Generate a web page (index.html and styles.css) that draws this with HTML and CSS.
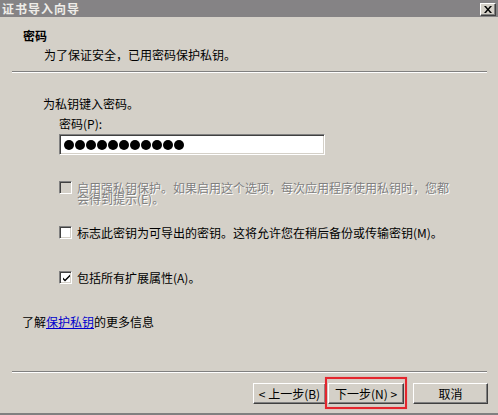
FILE: index.html
```html
<!DOCTYPE html>
<html lang="zh-CN">
<head>
<meta charset="utf-8">
<title>证书导入向导</title>
<link rel="stylesheet" href="styles.css">
</head>
<body>
<div class="window">
  <div class="titlebar">
    <span class="title">证书导入向导</span>
    <span class="close"><svg width="8" height="7" viewBox="0 0 8 7"><path d="M0 0h2l2 2.5 2-2.5h2l-3 3.5 3 3.5h-2l-2-2.5-2 2.5h-2l3-3.5z" fill="#000"/></svg></span>
  </div>
  <div class="header">
    <div class="h-title">密码</div>
    <div class="h-sub">为了保证安全，已用密码保护私钥。</div>
  </div>
  <div class="sep"></div>
  <div class="content">
    <div class="intro">为私钥键入密码。</div>
    <div class="field">
      <div class="label">密码(P):</div>
      <div class="input">
        <span class="dot"></span><span class="dot"></span><span class="dot"></span><span class="dot"></span><span class="dot"></span><span class="dot"></span><span class="dot"></span><span class="dot"></span><span class="dot"></span><span class="dot"></span><span class="dot"></span>
      </div>
      <div class="row row-1 disabled">
        <span class="cb cb-disabled"></span>
        <span class="cb-text">启用强私钥保护。如果启用这个选项，每次应用程序使用私钥时，您都会得到提示(E)。</span>
      </div>
      <div class="row row-2">
        <span class="cb"></span>
        <span class="cb-text">标志此密钥为可导出的密钥。这将允许您在稍后备份或传输密钥(M)。</span>
      </div>
      <div class="row row-3">
        <span class="cb"><svg width="9" height="9" viewBox="0 0 9 9"><path d="M1 3.5l2 2 5-5v2l-5 5-2-2z" fill="#000"/></svg></span>
        <span class="cb-text">包括所有扩展属性(A)。</span>
      </div>
    </div>
    <div class="more">了解<span class="link">保护私钥</span>的更多信息</div>
  </div>
  <div class="sep sep-bottom"></div>
  <div class="buttons">
    <span class="btn btn-back">&lt; 上一步(B)</span>
    <span class="btn btn-next">下一步(N) &gt;</span>
    <span class="btn btn-cancel">取消</span>
  </div>
</div>
</body>
</html>
```

FILE: styles.css
```css
* { box-sizing: border-box; }
html, body { margin: 0; padding: 0; }
body {
  width: 498px;
  height: 415px;
  background: #d4d0c8;
  font-family: "Noto Sans CJK SC", "Noto Sans", sans-serif;
  font-size: 12px;
  color: #000;
  overflow: hidden;
}
.window {
  width: 498px;
  height: 415px;
  display: flex;
  flex-direction: column;
  border-bottom: 2px solid #808080;
}
.titlebar {
  height: 17px;
  background: #858385;
  display: flex;
  align-items: center;
  justify-content: space-between;
  padding: 0 2px 0 2px;
}
.title {
  color: #efede9;
  font-weight: bold;
  font-size: 12px;
  letter-spacing: 1px;
  line-height: 13px;
}
.close {
  width: 16px;
  height: 13px;
  background: #d4d0c8;
  border-top: 1px solid #fff;
  border-left: 1px solid #fff;
  border-right: 1px solid #404040;
  border-bottom: 1px solid #404040;
  box-shadow: inset -1px -1px 0 #808080;
  display: flex;
  align-items: center;
  justify-content: center;
  margin-top: 1px;
}
.header { padding: 12px 0 0 23px; }
.h-title { font-weight: bold; line-height: 13px; }
.h-sub { margin: 6px 0 0 21px; line-height: 13px; }
.sep {
  margin: 10px 11px 0 12px;
  height: 2px;
  border-top: 1px solid #808080;
  border-bottom: 1px solid #fff;
}
.content { padding-left: 43px; }
.intro { margin-top: 24px; line-height: 13px; }
.field { padding-left: 16px; }
.label { margin-top: 7px; line-height: 13px; }
.input {
  margin-top: 4px;
  width: 266px;
  height: 21px;
  background: #fff;
  border-top: 1px solid #808080;
  border-left: 1px solid #808080;
  border-right: 1px solid #fff;
  border-bottom: 1px solid #fff;
  box-shadow: inset 1px 1px 0 #404040, inset -1px -1px 0 #d4d0c8;
  display: flex;
  align-items: center;
  gap: 1px;
  padding-left: 4px;
}
.dot {
  flex: none;
  width: 10px;
  height: 10px;
  border-radius: 50%;
  background: #000;
}
.row { display: flex; align-items: flex-start; }
.row-1 { margin-top: 26px; height: 22px; }
.row-2 { margin-top: 23px; }
.row-3 { margin-top: 32px; }
.cb {
  flex: none;
  width: 13px;
  height: 13px;
  background: #fff;
  border-top: 1px solid #808080;
  border-left: 1px solid #808080;
  border-right: 1px solid #fff;
  border-bottom: 1px solid #fff;
  box-shadow: inset 1px 1px 0 #404040, inset -1px -1px 0 #d4d0c8;
  display: flex;
  align-items: center;
  justify-content: center;
  padding: 1px 0 0 1px;
}
.cb-disabled { background: #d4d0c8; }
.cb-text { margin-left: 5px; line-height: 13px; }
.row-1 .cb-text { width: 378px; line-height: 11px; margin-top: 1px; }
.disabled .cb-text { color: #808080; text-shadow: 1px 1px 0 #fff; }
.more { margin: 31px 0 0 -21px; line-height: 13px; }
.link { color: #0000cc; text-decoration: underline; }
.sep-bottom { margin-top: 43px; }
.buttons {
  margin-top: 10px;
  display: flex;
  padding-left: 253px;
}
.btn {
  height: 21px;
  background: #d4d0c8;
  border-top: 1px solid #fff;
  border-left: 1px solid #fff;
  border-right: 1px solid #404040;
  border-bottom: 1px solid #404040;
  box-shadow: inset -1px -1px 0 #808080;
  display: flex;
  align-items: center;
  justify-content: center;
  line-height: 13px;
}
.btn-back { width: 73px; }
.btn-next { width: 76px; margin-left: 2px; position: relative; }
.btn-next::after {
  content: "";
  position: absolute;
  left: -4px;
  right: -4px;
  top: -7px;
  bottom: -6px;
  border: 2px solid #e4262e;
  box-shadow: 0 0 1px #f08080, inset 0 0 1px #f08080;
}
.btn-cancel { width: 75px; margin-left: 9px; }
```
